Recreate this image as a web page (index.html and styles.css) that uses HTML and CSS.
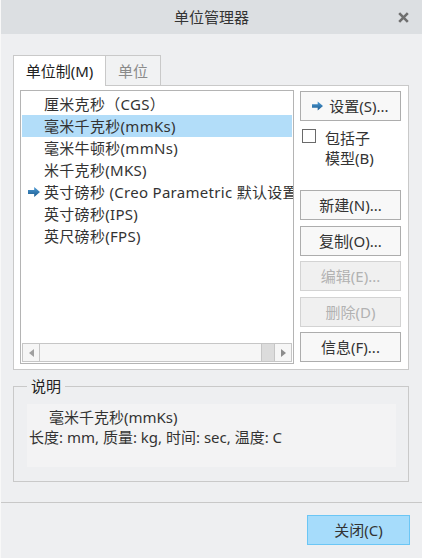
FILE: index.html
```html
<!DOCTYPE html>
<html lang="zh-CN">
<head>
<meta charset="utf-8">
<title>单位管理器</title>
<link rel="stylesheet" href="styles.css">
</head>
<body>
<div class="dialog">
  <div class="titlebar">
    <span class="spacer"></span>
    <span class="title">单位管理器</span>
    <svg class="close-x" width="11" height="11" viewBox="0 0 11 11"><path d="M1.2 1.2L9.8 9.8M9.8 1.2L1.2 9.8" stroke="#6f6f6f" stroke-width="2.6" stroke-linecap="butt"/></svg>
  </div>
  <div class="content">
    <div class="tabs">
      <div class="tab active">单位制(M)</div>
      <div class="tab">单位</div>
      <div class="tab-fill"></div>
    </div>
    <div class="panel">
      <div class="listbox">
        <ul class="items">
          <li class="item"><span class="ico"></span>厘米克秒（CGS）</li>
          <li class="item selected"><span class="ico"></span>毫米千克秒(mmKs)</li>
          <li class="item"><span class="ico"></span>毫米牛顿秒(mmNs)</li>
          <li class="item"><span class="ico"></span>米千克秒(MKS)</li>
          <li class="item"><svg class="ico" viewBox="0 0 12 10"><defs><linearGradient id="ag" x1="0" y1="0" x2="0" y2="1"><stop offset="0" stop-color="#4f9cd6"/><stop offset="1" stop-color="#1a5a8e"/></linearGradient></defs><path d="M0 3H6.2V0L12 5L6.2 10V7H0Z" fill="url(#ag)"/></svg>英寸磅秒 (Creo Parametric 默认设置)</li>
          <li class="item"><span class="ico"></span>英寸磅秒(IPS)</li>
          <li class="item"><span class="ico"></span>英尺磅秒(FPS)</li>
        </ul>
        <div class="hscroll">
          <div class="sbtn left"><svg width="5" height="8" viewBox="0 0 5 8"><path d="M5 0V8L0 4Z" fill="#a0a0a0"/></svg></div>
          <div class="thumb"></div>
          <div class="track"></div>
          <div class="sbtn right"><svg width="5" height="8" viewBox="0 0 5 8"><path d="M0 0V8L5 4Z" fill="#8c8c8c"/></svg></div>
        </div>
      </div>
      <div class="side">
        <button class="btn"><svg class="btn-ico" viewBox="0 0 12 10"><path d="M0 3H6.2V0L12 5L6.2 10V7H0Z" fill="url(#ag)"/></svg>设置(S)...</button>
        <div class="check">
          <span class="box"></span>
          <span class="check-label">包括子<br>模型(B)</span>
        </div>
        <button class="btn first">新建(N)...</button>
        <button class="btn">复制(O)...</button>
        <button class="btn disabled">编辑(E)...</button>
        <button class="btn disabled">删除(D)</button>
        <button class="btn">信息(F)...</button>
      </div>
    </div>
    <fieldset class="group">
      <legend>说明</legend>
      <div class="desc">
        <div class="desc-name">毫米千克秒(mmKs)</div>
        <div>长度: mm, 质量: kg, 时间: sec, 温度: C</div>
      </div>
    </fieldset>
  </div>
  <div class="footer">
    <button class="btn primary">关闭(C)</button>
  </div>
</div>
</body>
</html>
```

FILE: styles.css
```css
* { box-sizing: border-box; }
html, body { margin: 0; padding: 0; }
body {
  width: 422px;
  height: 558px;
  overflow: hidden;
  background: #eeeff1;
  font-family: "Noto Sans", "Noto Sans CJK SC", sans-serif;
  font-size: 15px;
  color: #333;
}
.dialog {
  height: 558px;
  border-left: 1px solid #f8f8f8;
  display: flex;
  flex-direction: column;
}
.titlebar {
  height: 34px;
  background: #dcdfe2;
  display: grid;
  grid-template-columns: 1fr auto 1fr;
  align-items: center;
  line-height: 20px;
}
.title { color: #333; }
.close-x { justify-self: end; margin-right: 13px; margin-top: 1px; }
.content { padding: 21px 13px 0 12px; }
.tabs { display: flex; height: 31px; }
.tab {
  height: 31px;
  line-height: 30px;
  text-align: center;
  border: 1px solid #c9c9c9;
  border-bottom: 1px solid #c9c9c9;
}
.tab.active {
  width: 93px;
  background: #fff;
  border-bottom: none;
  color: #222;
}
.tab:not(.active) {
  width: 55px;
  border-left: none;
  background: #f1f2f3;
  color: #8a8a8a;
}
.tab-fill { flex: 1; border-bottom: 1px solid #c9c9c9; }
.panel {
  height: 284px;
  background: #fff;
  border: 1px solid #c9c9c9;
  border-top: none;
  padding: 4px 7px 5px 6px;
  display: flex;
  gap: 6px;
}
.listbox {
  width: 274px;
  height: 274px;
  border: 1px solid #b4b4b4;
  display: flex;
  flex-direction: column;
  overflow: hidden;
}
.items {
  list-style: none;
  margin: 0;
  padding: 2px 1px 0;
  flex: 1;
  overflow: hidden;
}
.item {
  height: 22px;
  line-height: 22px;
  display: flex;
  align-items: center;
  white-space: nowrap;
  padding-left: 6px;
  color: #333;
  letter-spacing: 0.3px;
}
.item.selected { background: #b2ddf9; }
.ico { width: 12px; height: 10px; margin-right: 4px; flex: none; }
.hscroll {
  height: 19px;
  margin: 0 1px 1px;
  border: 1px solid #c6c6c6;
  display: flex;
  background: #f6f6f6;
}
.sbtn {
  width: 17px;
  display: flex;
  align-items: center;
  justify-content: center;
  background: #f6f6f6;
}
.sbtn.left { border-right: 1px solid #c6c6c6; }
.sbtn.right { border-left: 1px solid #c6c6c6; }
.thumb { flex: 1; background: #f6f6f6; border-right: 1px solid #c6c6c6; }
.track { width: 12px; background: #dcdcdc; }
.side {
  width: 101px;
  padding-top: 1px;
  display: flex;
  flex-direction: column;
}
.btn {
  width: 101px;
  height: 30px;
  flex: none;
  display: flex;
  align-items: center;
  justify-content: center;
  border: 1px solid #adadad;
  background: #f8f8f8;
  font: inherit;
  color: #333;
  padding: 0;
  margin: 0 0 5.5px;
  line-height: 20px;
}
.btn-ico { width: 11px; height: 10px; margin-right: 6px; }
.btn.disabled {
  color: #b2b2b2;
  border-color: #d3d3d3;
  background: #f0f0f0;
}
.btn.first { margin-top: 22px; }
.check {
  display: flex;
  align-items: flex-start;
  margin-top: 1.5px;
  height: 40px;
}
.box {
  width: 14px;
  height: 14px;
  border: 1px solid #6a6a6a;
  background: #fff;
  margin: 1px 0 0 2px;
  flex: none;
}
.check-label { line-height: 20px; margin-left: 9px; margin-top: 0; }
.group {
  margin: 6px 0 0;
  padding: 8px 12px 14px 13px;
  border: 1px solid #c9c9c9;
  min-width: 0;
}
.group legend {
  padding: 0 4px;
  margin: 0;
  line-height: 20px;
  color: #222;
}
.desc {
  height: 63px;
  background: #f3f3f4;
  padding: 3px 2px;
  line-height: 20px;
  color: #333;
}
.desc-name { padding-left: 20px; }
.footer {
  margin-top: 20px;
  border-top: 1px solid #c8c8c8;
  padding: 12px 12px 0;
  display: flex;
  justify-content: flex-end;
}
.btn.primary {
  width: 103px;
  background: #a6dcfb;
  border-color: #6bc6f5;
  margin: 0;
}
```
